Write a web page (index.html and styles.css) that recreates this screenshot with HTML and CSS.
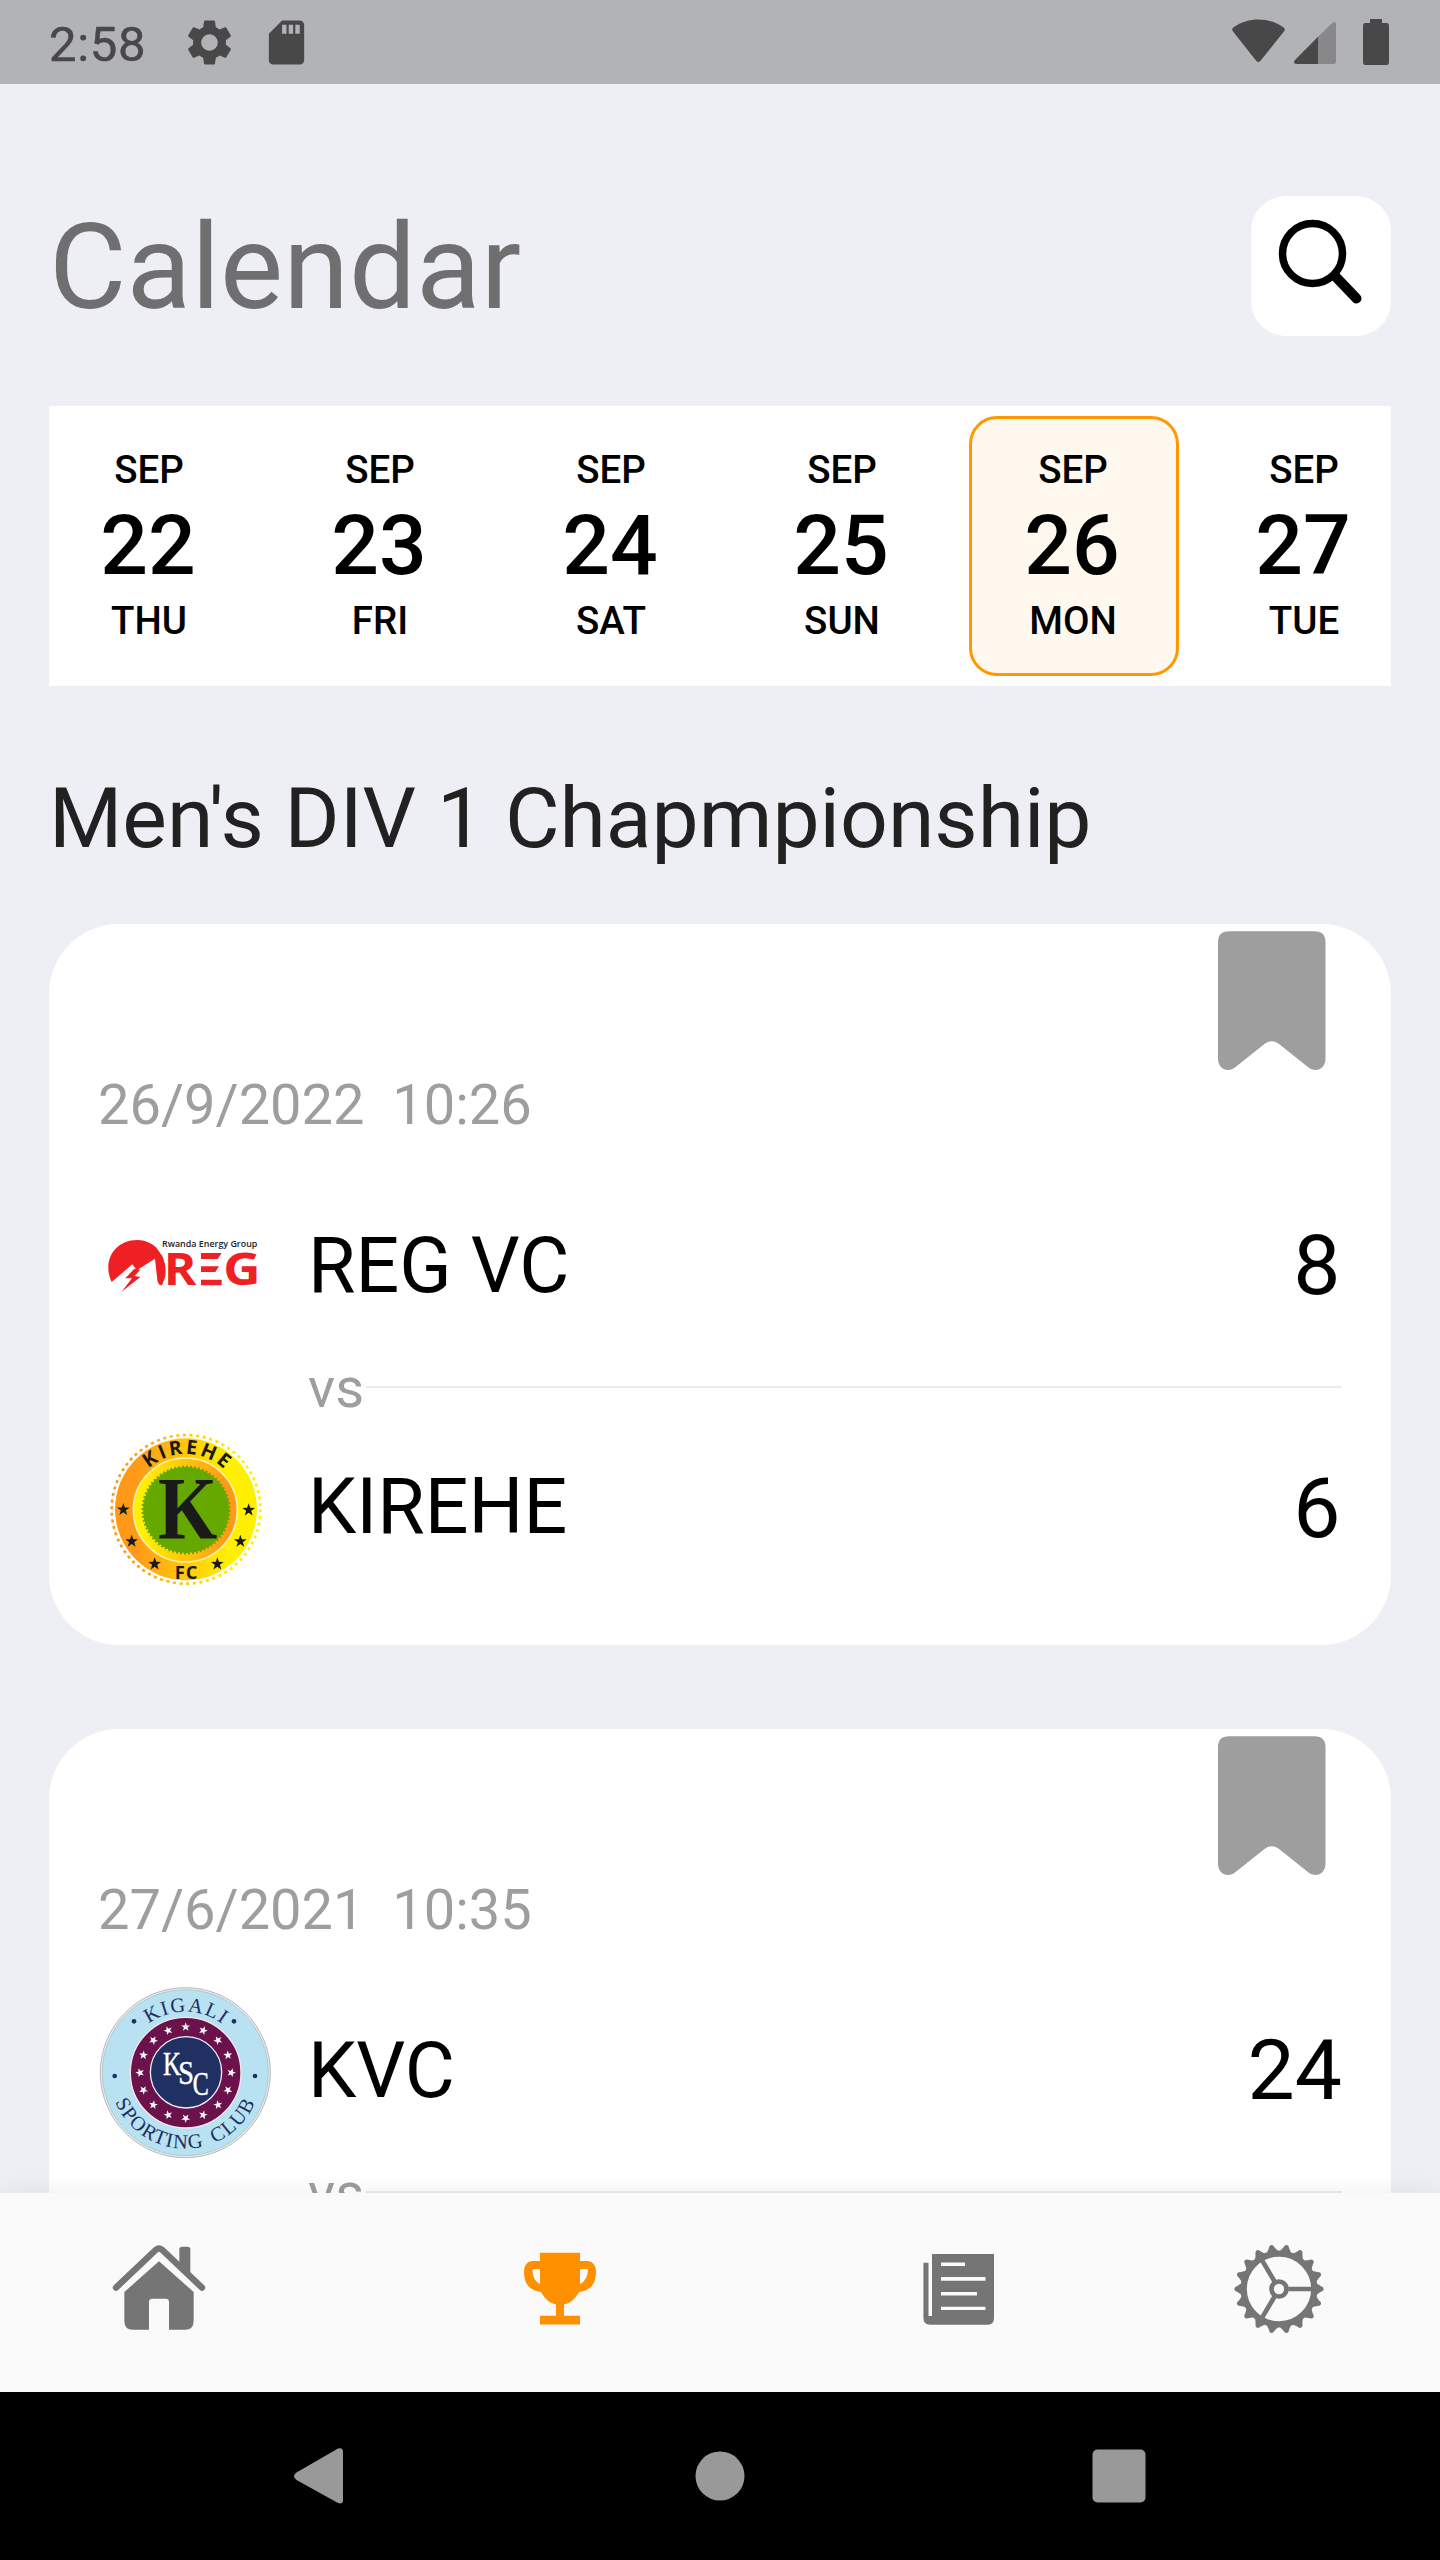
FILE: index.html
```html
<!DOCTYPE html>
<html lang="en">
<head>
<meta charset="utf-8">
<title>Calendar</title>
<link rel="stylesheet" href="styles.css">
</head>
<body>
<svg class="defs" aria-hidden="true">
  <defs>
    <path id="star" d="M0-20 4.7-6.5 19-6.2 7.6 2.5 11.8 16.2 0 8-11.8 16.2-7.6 2.5-19-6.2-4.7-6.5Z"/>
    <path id="smallStar" d="M0-14 3.3-4.500 13.300-4.300 5.300 1.700 8.300 11.300 0 5.600-8.300 11.300-5.300 1.700-13.300-4.300-3.300-4.500Z"/>
    <path id="tooth" d="M112-17C118-15 121-10 131-6Q137 0 131 6C121 10 118 15 112 17Z"/>
    <g id="teeth"><use href="#tooth"/><use href="#tooth" transform="rotate(20)"/><use href="#tooth" transform="rotate(40)"/></g>
    <g id="stars4"><use href="#smallStar" y="-137"/><use href="#smallStar" y="-137" transform="rotate(22.5)"/><use href="#smallStar" y="-137" transform="rotate(45)"/><use href="#smallStar" y="-137" transform="rotate(67.5)"/></g>
    <path id="bookmark" d="M11 0H97Q108 0 108 11V128C108 138 98 143 90 136L61 113Q54 108 47 113L18 136C10 143 0 138 0 128V11Q0 0 11 0Z"/>
  </defs>
</svg>
<div class="screen">
  <header class="status">
    <span class="clock">2:58</span>
    <svg class="status-gear" viewBox="0 0 24 24"><path d="M19.14 12.94c.04-.3.06-.61.06-.94 0-.32-.02-.64-.07-.94l2.03-1.58c.18-.14.23-.41.12-.61l-1.92-3.32c-.12-.22-.37-.29-.59-.22l-2.39.96c-.5-.38-1.03-.7-1.62-.94L14.4 2.81c-.04-.24-.24-.41-.48-.41h-3.84c-.24 0-.43.17-.47.41L9.25 5.35C8.66 5.59 8.12 5.92 7.63 6.29L5.24 5.33c-.22-.08-.47 0-.59.22L2.74 8.87c-.12.21-.08.47.12.61l2.03 1.58C4.84 11.36 4.8 11.69 4.8 12s.02.64.07.94l-2.03 1.58c-.18.14-.23.41-.12.61l1.92 3.32c.12.22.37.29.59.22l2.39-.96c.5.38 1.03.7 1.62.94l.36 2.54c.05.24.24.41.48.41h3.84c.24 0 .44-.17.47-.41l.36-2.54c.59-.24 1.13-.56 1.62-.94l2.39.96c.22.08.47 0 .59-.22l1.92-3.32c.12-.22.07-.47-.12-.61L19.14 12.94zM12 15.6c-1.98 0-3.6-1.62-3.6-3.6s1.62-3.6 3.6-3.6 3.6 1.62 3.6 3.6-1.62 3.6-3.6 3.6z"/></svg>
    <svg class="status-card" viewBox="0 0 24 24"><path d="M18 2h-8L4.02 8 4 20c0 1.1.9 2 2 2h12c1.1 0 2-.9 2-2V4c0-1.1-.9-2-2-2zm-6 6h-2V4h2v4zm3 0h-2V4h2v4zm3 0h-2V4h2v4z"/></svg>
    <svg class="status-right" viewBox="0 0 540 210">
      <path d="M38 63Q34 56 41 52C85 21 146 21 190 52Q197 56 193 63L121 153Q115 159 109 153Z"/>
      <path opacity=".4" d="M294 80 338 38Q348 32 348 43V155Q348 162 341 162H294Z"/>
      <path d="M294 80V162H229Q217 161 225 150Z"/>
      <path d="M450 27H486V39H500Q507 39 507 46V158Q507 165 500 165H436Q429 165 429 158V46Q429 39 436 39H450Z"/>
    </svg>
  </header>

  <main class="content">
    <div class="heading">
      <h1>Calendar</h1>
      <button class="search" aria-label="Search">
        <svg viewBox="0 0 140 140"><circle cx="61.5" cy="57.5" r="30"/><path d="M84 80 105.500 102.500"/></svg>
      </button>
    </div>

    <div class="dates">
      <div class="day"><span>SEP</span><b>22</b><span>THU</span></div>
      <div class="day"><span>SEP</span><b>23</b><span>FRI</span></div>
      <div class="day"><span>SEP</span><b>24</b><span>SAT</span></div>
      <div class="day"><span>SEP</span><b>25</b><span>SUN</span></div>
      <div class="day selected"><span>SEP</span><b>26</b><span>MON</span></div>
      <div class="day"><span>SEP</span><b>27</b><span>TUE</span></div>
    </div>

    <h2>Men's DIV 1 Chapmpionship</h2>

    <article class="card">
      <div class="mark"><svg viewBox="0 0 108 139"><use href="#bookmark"/></svg></div>
      <div class="when">26/9/2022&nbsp; 10:26</div>
      <div class="team">
        <svg class="logo" viewBox="54 -63 525 525">
          <path fill="#ee2024" d="M95 246C66 185 102 120 172 120C228 122 256 165 258 215Q258 240 245 256Q234 256 232 240L225 176 163 215 168 207 157 193Z"/>
          <path fill="#ee2024" d="M163 206 136 235 156 235 125 275 181 231 164 228 181 209Z"/>
          <path d="M232 145Q278 195 248 256" fill="none" stroke="#fff" stroke-width="3"/>
          <g fill="#ee2024" font-family="'Open Sans'" font-weight="700" font-size="133">
            <text x="251" y="256" textLength="98" lengthAdjust="spacingAndGlyphs">R</text>
            <text x="430" y="256" textLength="112" lengthAdjust="spacingAndGlyphs">G</text>
            <path d="M363 159H425L413 177H363ZM363 199H417L406 216H363ZM363 239H425V256H363Z"/>
          </g>
          <text x="246" y="142" font-family="'Open Sans'" font-weight="600" font-size="28" fill="#222" textLength="286" lengthAdjust="spacingAndGlyphs">Rwanda Energy Group</text>
        </svg>
        <span class="name">REG VC</span><span class="score">8</span>
      </div>
      <div class="versus"><span>vs</span><i></i></div>
      <div class="team away">
        <svg class="logo" viewBox="54 660 525 525">
          <defs>
            <linearGradient id="warm"><stop offset=".15" stop-color="#ff9a18"/><stop offset=".8" stop-color="#fff000"/></linearGradient>
            <linearGradient id="warmBack"><stop offset=".1" stop-color="#fff000"/><stop offset=".9" stop-color="#ff9a18"/></linearGradient>
            <path id="kirArc" d="M152 925A166 166 0 0 1 484 925"/>
          </defs>
          <circle cx="318" cy="925" r="223" fill="none" stroke="url(#warm)" stroke-width="8" stroke-dasharray="9 11"/>
          <circle cx="318" cy="925" r="213" fill="url(#warm)"/>
          <circle cx="316" cy="927" r="156" fill="url(#warmBack)" stroke="#fff3b0" stroke-width="5"/>
          <circle cx="318" cy="927" r="129" fill="#64a800"/>
          <circle cx="318" cy="927" r="130" fill="none" stroke="#64a800" stroke-width="7" stroke-dasharray="6 6"/>
          <g fill="#1a1a1a">
            <text x="234" y="1010" font-family="'Liberation Serif'" font-weight="700" font-size="264" textLength="178" lengthAdjust="spacingAndGlyphs">K</text>
            <text font-family="'Open Sans'" font-weight="700" font-size="59" letter-spacing="8" text-anchor="middle"><textPath href="#kirArc" startOffset="51%">KIREHE</textPath></text>
            <text x="318" y="1134" font-family="'Open Sans'" font-weight="700" font-size="55" text-anchor="middle" textLength="68">FC</text>
            <use href="#star" x="130" y="926"/><use href="#star" x="155" y="1021"/><use href="#star" x="224" y="1089"/>
            <use href="#star" x="412" y="1089"/><use href="#star" x="481" y="1021"/><use href="#star" x="506" y="927"/>
          </g>
        </svg>
        <span class="name">KIREHE</span><span class="score">6</span>
      </div>
    </article>

    <article class="card">
      <div class="mark"><svg viewBox="0 0 108 139"><use href="#bookmark"/></svg></div>
      <div class="when">27/6/2021&nbsp; 10:35</div>
      <div class="team">
        <svg class="logo" viewBox="174 850 525 525">
          <defs>
            <path id="kigArc" d="M253 1116A183 183 0 0 1 619 1116"/>
            <path id="clubArc" d="M208 1116A228 228 0 0 0 664 1116"/>
          </defs>
          <circle cx="436" cy="1116" r="255" fill="#e6eef0" stroke="#b4b8ba" stroke-width="3"/>
          <circle cx="436" cy="1116" r="249" fill="#b8e1f2" stroke="#a9b6ba" stroke-width="2"/>
          <circle cx="437" cy="1116" r="166" fill="#6b114b" stroke="#f3e6ef" stroke-width="4"/>
          <circle cx="438" cy="1115" r="107" fill="#203062" stroke="#f0eef5" stroke-width="4"/>
          <g fill="#fff" transform="translate(437 1116)">
            <use href="#stars4"/><use href="#stars4" transform="rotate(90)"/>
            <use href="#stars4" transform="rotate(180)"/><use href="#stars4" transform="rotate(270)"/>
          </g>
          <g fill="#fff" stroke="#fff" stroke-width="1.500" font-family="'Liberation Serif'" font-size="100">
            <text x="369" y="1123" textLength="54" lengthAdjust="spacingAndGlyphs">K</text>
            <text x="415" y="1150" textLength="47" lengthAdjust="spacingAndGlyphs">S</text>
            <text x="458" y="1184" textLength="48" lengthAdjust="spacingAndGlyphs">C</text>
          </g>
          <g fill="#203062" font-family="'Liberation Serif'" font-size="61" text-anchor="middle">
            <text letter-spacing="5"><textPath href="#kigArc" startOffset="50.5%">KIGALI</textPath></text>
            <text letter-spacing="4" word-spacing="12"><textPath href="#clubArc" startOffset="50%">SPORTING CLUB</textPath></text>
            <circle cx="282" cy="962" r="7"/><circle cx="582" cy="962" r="7"/><circle cx="224" cy="1126" r="7"/><circle cx="645" cy="1126" r="7"/>
          </g>
        </svg>
        <span class="name">KVC</span><span class="score wide">24</span>
      </div>
      <div class="versus"><span>vs</span><i></i></div>
    </article>
  </main>

  <nav class="tabs">
    <svg viewBox="0 0 360 330">
      <path d="M48 161 168 47Q177 40 186 47L306 161" fill="none" stroke="#757575" stroke-width="19" stroke-linecap="round"/>
      <path d="M238 87V46Q238 38 246 38H263Q271 38 271 46V118L262 126Z"/>
      <path d="M177 82 281 174V260Q281 287 255 287H207V204Q207 194 197 194H157Q147 194 147 204V287H99Q73 287 73 260V174Z"/>
    </svg>
    <svg class="active" viewBox="0 0 120 110"><path fill-rule="evenodd" d="M40 18.700H80V27H88Q96 28 96 38C96 50 90 57 79 58Q73 69 64 70.500V81.700H80V90.500H40V81.700H56V70.500Q47 69 41 58C30 57 24 50 24 38Q24 28 32 27H40ZM40 35H32.500Q32 46 40 50ZM80 35V50Q88 46 88 35Z"/></svg>
    <svg viewBox="0 0 120 110"><path fill-rule="evenodd" d="M33 20H95V84Q95 90.700 89 90.700H31Q24.400 90.700 24.400 84V28.700H29.500V82H33ZM42 28.500V32H66V28.500ZM42 43V46.700H86.500V43ZM42 58V61.500H78V58ZM42 72.700V76H86.500V72.700Z"/></svg>
    <svg viewBox="0 0 360 330">
      <g transform="translate(180 165)">
        <circle r="106" fill="none" stroke="#757575" stroke-width="19"/>
        <circle r="22.500" fill="none" stroke="#757575" stroke-width="14"/>
        <path d="M28 0H100M-14-24-52-88M-14 24-52 88" fill="none" stroke="#757575" stroke-width="14"/>
        <use href="#teeth"/><use href="#teeth" transform="rotate(60)"/><use href="#teeth" transform="rotate(120)"/>
        <use href="#teeth" transform="rotate(180)"/><use href="#teeth" transform="rotate(240)"/><use href="#teeth" transform="rotate(300)"/>
      </g>
    </svg>
  </nav>
  <footer class="system">
    <svg viewBox="0 0 60 60"><path d="M5.500 26.500 47 2.500Q52 1 52 6V54Q52 58.500 47 57L5.500 34Q.5 30 5.500 26.500Z"/></svg>
    <svg viewBox="0 0 60 60"><circle cx="30" cy="30" r="24.500"/></svg>
    <svg viewBox="0 0 60 60"><rect x="3.500" y="3.500" width="53" height="53" rx="5"/></svg>
  </footer>
</div>
</body>
</html>
```
FILE: styles.css
```css
* { box-sizing: border-box; }
body { margin: 0; font-family: Roboto, sans-serif; color: #000; background: #eeeff4; }
svg { display: block; }
.defs { position: absolute; width: 0; height: 0; }

.screen { display: flex; flex-direction: column; width: 1440px; height: 2560px; overflow: hidden; }

.status { flex: none; display: flex; align-items: center; height: 84px; padding: 0 49px; background: #b2b3b7; color: #484848; }
.status svg { fill: #484848; }
.clock { width: 133px; padding-top: 5px; font-size: 49px; line-height: 84px; letter-spacing: .7px; -webkit-text-stroke: .5px #484848; }
.status-gear { width: 55px; height: 55px; }
.status-card { width: 53px; height: 53px; margin-left: 23px; }
.status-right { width: 180px; height: 70px; margin: 6px -9px 0 auto; }

.content { flex: 1; min-height: 0; overflow: hidden; padding: 112px 49px 0; }
.heading { display: flex; justify-content: space-between; align-items: center; height: 140px; }
h1 { margin: 0; padding-top: 3px; font-size: 119px; font-weight: 400; line-height: 137px; color: #6f6f71; }
.search { width: 140px; height: 140px; padding: 0; border: 0; border-radius: 35px; background: #fff; }
.search svg { width: 140px; height: 140px; fill: none; stroke: #000; stroke-width: 7.5; }
.search path { stroke-width: 10; stroke-linecap: round; }

.dates { display: flex; gap: 21px; height: 280px; margin-top: 70px; padding-top: 10px; background: #fff; overflow: hidden; }
.day { flex: none; width: 210px; height: 260px; padding-top: 27.5px; border: 3.5px solid transparent; border-radius: 28px; text-align: center; }
.day:first-child { margin-left: -4.5px; }
.selected { background: #fff8ef; border-color: #ff9800; }
.day span { display: block; padding-right: 1px; font-size: 38.5px; font-weight: 500; line-height: 45px; }
.day b { display: block; padding: 2px 3px 0 0; font-size: 84px; font-weight: 500; line-height: 104px; }

h2 { margin: 83px 0 57px; padding-top: 1px; font-size: 84px; font-weight: 400; line-height: 97px; color: #212121; white-space: nowrap; }

.card { height: 721px; margin-bottom: 84px; padding: 0 49px; border-radius: 70px; background: #fff; }
.mark { display: flex; justify-content: flex-end; height: 148px; padding: 7px 16.5px 0 0; }
.mark svg { width: 107.5px; height: 139px; fill: #9e9e9e; }
.when { height: 66px; margin-bottom: 40px; font-size: 56px; line-height: 66px; color: #9e9e9e; }
.team { display: flex; align-items: center; height: 176px; }
.logo { flex: none; width: 175px; height: 175px; margin-right: 35px; }
.name { font-size: 77px; line-height: 90px; }
.away .name { padding-bottom: 2px; }
.away .score { padding-top: 1px; }
.score { margin-left: auto; padding-right: 1.5px; font-size: 84px; line-height: 98px; }
.wide { padding-right: 0; }
.versus { display: flex; align-items: center; height: 66px; margin-left: 210px; }
.versus span { padding-top: 2px; font-size: 56px; line-height: 64px; color: #9e9e9e; }
.versus i { flex: 1; height: 2px; margin-left: 2px; background: #ececec; }

.tabs { flex: none; position: relative; display: grid; grid-template-columns: 319px 482px 316px 323px; align-items: center; justify-items: center; height: 199px; padding-bottom: 7px; background: #fafafa; box-shadow: 0 0 24px rgba(0, 0, 0, .07); }
.tabs svg { width: 120px; height: 110px; fill: #757575; }
.tabs .active { fill: #ff9100; }

.system { flex: none; display: flex; justify-content: center; align-items: center; gap: 339px; height: 168px; padding-right: 1px; background: #000; }
.system svg { width: 60px; height: 60px; fill: #999; }
```
